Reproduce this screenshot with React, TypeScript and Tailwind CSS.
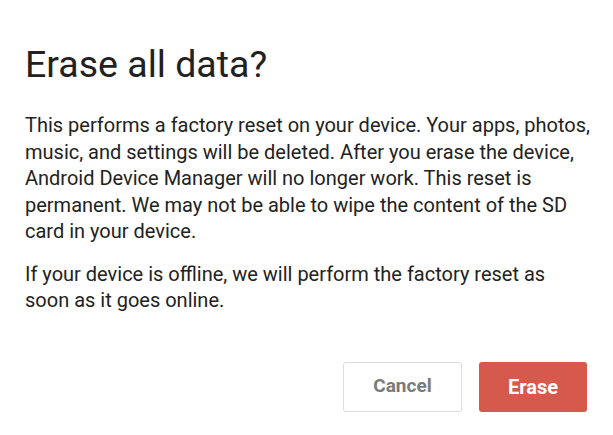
export default function App() {
  return (
    <div className="w-[613px] h-[435px] bg-white overflow-hidden" style={{ fontFamily: 'Roboto, "Noto Sans", sans-serif' }}>
      <div className="pl-[25px] pt-[42px]">
        <h1 className="text-[37.5px] leading-[45px] text-[#212121] font-normal">Erase all data?</h1>
        <div className="mt-[25px] w-[567px] text-[20px] leading-[26.5px] text-[#222222]">
          <p className="mb-[16px]">
            This performs a factory reset on your device. Your apps, photos, music, and settings will be deleted. After you erase the device, Android Device Manager will no longer work. This reset is permanent. We may not be able to wipe the content of the SD card in your device.
          </p>
          <p>If your device is offline, we will perform the factory reset as soon as it goes online.</p>
        </div>
      </div>
      <div className="flex justify-end gap-[17px] pr-[26px] mt-[48px]">
        <button className="w-[119px] h-[50px] rounded-[3px] border border-[#dcdcdc] bg-white text-[#7a7a7a] text-[19px] font-bold">
          Cancel
        </button>
        <button className="w-[108px] h-[50px] rounded-[3px] bg-[#d55a4c] text-white text-[20px] font-bold">
          Erase
        </button>
      </div>
    </div>
  );
}
